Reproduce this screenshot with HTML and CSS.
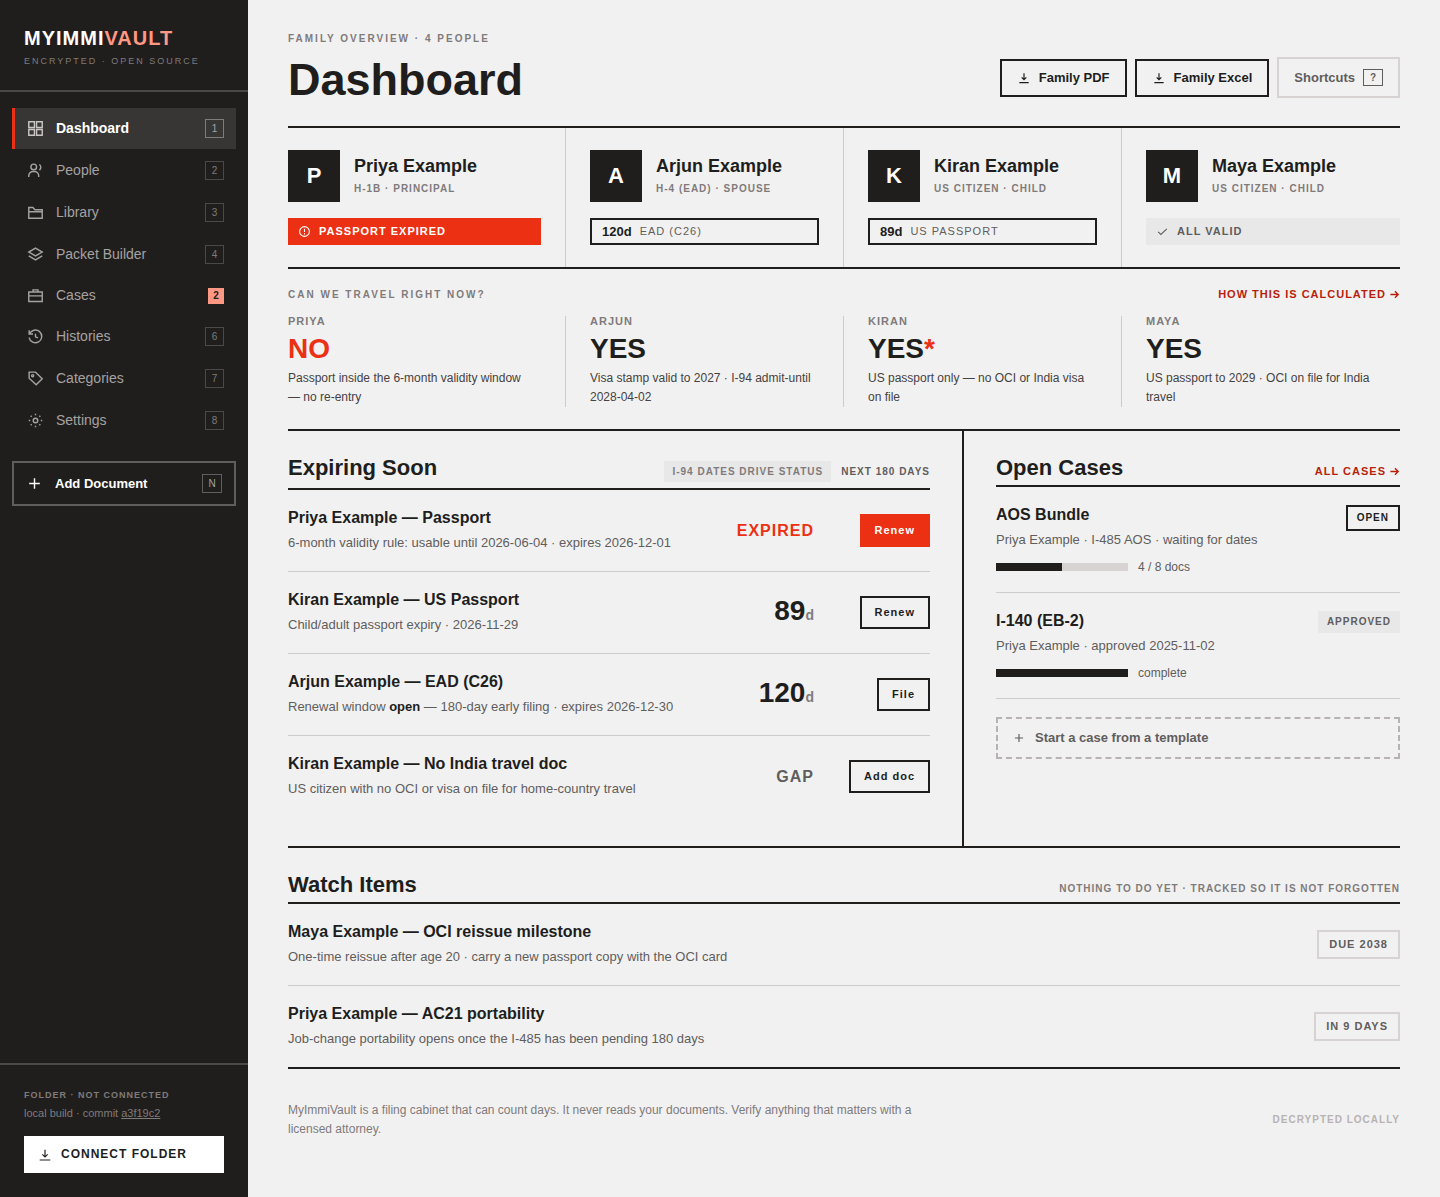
FILE: index.html
```html
<!DOCTYPE html>
<html lang="en">
<head>
    <meta charset="UTF-8">
    <meta name="viewport" content="width=device-width, initial-scale=1.0">
    <title>MyImmiVault - Dashboard</title>
    <link rel="stylesheet" href="styles.css">
</head>
<body>
    <aside class="sidebar">
        <div class="brand">
            <div class="brand-name">MYIMMI<span>VAULT</span></div>
            <div class="brand-sub">Encrypted · Open source</div>
        </div>

        <nav class="nav">
            <a class="nav-item active" href="#dashboard">
                <svg class="nav-icon" viewBox="0 0 24 24"><path d="M2.500 2.500h8v8h-8zM13.500 2.500h8v8h-8zM2.500 13.500h8v8h-8zM13.500 13.500h8v8h-8z"/></svg>
                <span class="nav-label">Dashboard</span>
                <kbd>1</kbd>
            </a>
            <a class="nav-item" href="#people">
                <svg class="nav-icon" viewBox="0 0 24 24"><circle cx="9.500" cy="7" r="4"/><path d="M2.500 21v-1.500a6 6 0 0 1 6-6h2a6 6 0 0 1 6 6V21M17.500 3.500a5 5 0 0 1 0 8"/></svg>
                <span class="nav-label">People</span>
                <kbd>2</kbd>
            </a>
            <a class="nav-item" href="#library">
                <svg class="nav-icon" viewBox="0 0 24 24"><path d="M2.500 20v-15h6l2.500 3h10.500v12zM2.500 11h19"/></svg>
                <span class="nav-label">Library</span>
                <kbd>3</kbd>
            </a>
            <a class="nav-item" href="#packets">
                <svg class="nav-icon" viewBox="0 0 24 24"><path d="M12 3l9.500 5.500L12 14 2.500 8.500zM2.500 14l9.500 5.500 9.500-5.500"/></svg>
                <span class="nav-label">Packet Builder</span>
                <kbd>4</kbd>
            </a>
            <a class="nav-item" href="#cases">
                <svg class="nav-icon" viewBox="0 0 24 24"><path d="M2.500 7h19v13.500h-19zM8.500 7V4h7v3M2.500 12.500h19"/></svg>
                <span class="nav-label">Cases</span>
                <span class="count">2</span>
            </a>
            <a class="nav-item" href="#histories">
                <svg class="nav-icon" viewBox="0 0 24 24"><path d="M3 3v5.500h5.500M3.500 8.500a9 9 0 1 1-.5 5M12 8v4.500l3.500 1.500"/></svg>
                <span class="nav-label">Histories</span>
                <kbd>6</kbd>
            </a>
            <a class="nav-item" href="#categories">
                <svg class="nav-icon" viewBox="0 0 24 24"><path d="M3 3h9l9.500 9.500-8.500 8.500L3 11.500z"/><circle cx="8" cy="8" r="1.500"/></svg>
                <span class="nav-label">Categories</span>
                <kbd>7</kbd>
            </a>
            <a class="nav-item" href="#settings">
                <svg class="nav-icon" viewBox="0 0 24 24"><circle cx="12" cy="12" r="3.200"/><path d="M12 2.500v2M12 19.500v2M2.500 12h2M19.500 12h2M5.200 5.200l1.400 1.400M17.400 17.400l1.400 1.400M5.200 18.800l1.400-1.400M17.400 6.600l1.400-1.400"/></svg>
                <span class="nav-label">Settings</span>
                <kbd>8</kbd>
            </a>
            <button class="add-doc" type="button">
                <svg class="nav-icon" viewBox="0 0 24 24"><path d="M12 4.500v15M4.500 12h15"/></svg>
                <span class="nav-label">Add Document</span>
                <kbd>N</kbd>
            </button>
        </nav>

        <div class="sidebar-foot">
            <div class="folder-state">Folder · Not connected</div>
            <div class="build">local build · commit <a href="#commit">a3f19c2</a></div>
            <button class="connect" type="button">
                <svg class="icon" viewBox="0 0 24 24"><path d="M12 3v12M7.500 11l4.500 4.500 4.500-4.500M3 20.500h18"/></svg>
                Connect folder
            </button>
        </div>
    </aside>

    <main class="main">
        <header class="page-head">
            <div>
                <div class="eyebrow">Family overview · 4 people</div>
                <h1>Dashboard</h1>
            </div>
            <div class="actions">
                <button class="btn" type="button">
                    <svg class="icon" viewBox="0 0 24 24"><path d="M12 4v11M8 11l4 4 4-4M4 20h16"/></svg>
                    Family PDF
                </button>
                <button class="btn" type="button">
                    <svg class="icon" viewBox="0 0 24 24"><path d="M12 4v11M8 11l4 4 4-4M4 20h16"/></svg>
                    Family Excel
                </button>
                <button class="btn btn-quiet" type="button">Shortcuts <kbd>?</kbd></button>
            </div>
        </header>

        <section class="people">
            <article class="person">
                <div class="person-top">
                    <div class="avatar">P</div>
                    <div>
                        <h3>Priya Example</h3>
                        <div class="person-role">H-1B · Principal</div>
                    </div>
                </div>
                <div class="status expired">
                    <svg class="status-icon" viewBox="0 0 24 24"><circle cx="12" cy="12" r="9"/><path d="M12 7v6M12 15v2.500"/></svg>
                    Passport expired
                </div>
            </article>
            <article class="person">
                <div class="person-top">
                    <div class="avatar">A</div>
                    <div>
                        <h3>Arjun Example</h3>
                        <div class="person-role">H-4 (EAD) · Spouse</div>
                    </div>
                </div>
                <div class="status due"><b>120d</b> EAD (C26)</div>
            </article>
            <article class="person">
                <div class="person-top">
                    <div class="avatar">K</div>
                    <div>
                        <h3>Kiran Example</h3>
                        <div class="person-role">US citizen · Child</div>
                    </div>
                </div>
                <div class="status due"><b>89d</b> US passport</div>
            </article>
            <article class="person">
                <div class="person-top">
                    <div class="avatar">M</div>
                    <div>
                        <h3>Maya Example</h3>
                        <div class="person-role">US citizen · Child</div>
                    </div>
                </div>
                <div class="status valid">
                    <svg class="status-icon" viewBox="0 0 24 24"><path d="M4 12.500l5 5L20 7"/></svg>
                    All valid
                </div>
            </article>
        </section>

        <section class="travel">
            <div class="travel-head">
                <div class="eyebrow">Can we travel right now?</div>
                <a class="more" href="#how">How this is calculated
                    <svg class="arrow" viewBox="0 0 24 24"><path d="M3 12h17M13 5l7 7-7 7"/></svg>
                </a>
            </div>
            <div class="travel-grid">
                <div class="travel-cell">
                    <div class="travel-name">Priya</div>
                    <div class="answer no">NO</div>
                    <p>Passport inside the 6-month validity window — no re-entry</p>
                </div>
                <div class="travel-cell">
                    <div class="travel-name">Arjun</div>
                    <div class="answer">YES</div>
                    <p>Visa stamp valid to 2027 · I-94 admit-until 2028-04-02</p>
                </div>
                <div class="travel-cell">
                    <div class="travel-name">Kiran</div>
                    <div class="answer">YES<span class="star">*</span></div>
                    <p>US passport only — no OCI or India visa on file</p>
                </div>
                <div class="travel-cell">
                    <div class="travel-name">Maya</div>
                    <div class="answer">YES</div>
                    <p>US passport to 2029 · OCI on file for India travel</p>
                </div>
            </div>
        </section>

        <div class="columns">
            <section class="expiring">
                <div class="section-head">
                    <h2>Expiring Soon</h2>
                    <div class="section-notes">
                        <span class="note-tag">I-94 dates drive status</span>
                        <span class="note note-dark">Next 180 days</span>
                    </div>
                </div>
                <div class="row">
                    <div>
                        <h4>Priya Example — Passport</h4>
                        <p>6-month validity rule: usable until 2026-06-04 · expires 2026-12-01</p>
                    </div>
                    <div class="when word red">EXPIRED</div>
                    <div class="row-action"><button class="btn-small btn-red" type="button">Renew</button></div>
                </div>
                <div class="row">
                    <div>
                        <h4>Kiran Example — US Passport</h4>
                        <p>Child/adult passport expiry · 2026-11-29</p>
                    </div>
                    <div class="when">89<small>d</small></div>
                    <div class="row-action"><button class="btn-small" type="button">Renew</button></div>
                </div>
                <div class="row">
                    <div>
                        <h4>Arjun Example — EAD (C26)</h4>
                        <p>Renewal window <b>open</b> — 180-day early filing · expires 2026-12-30</p>
                    </div>
                    <div class="when">120<small>d</small></div>
                    <div class="row-action"><button class="btn-small" type="button">File</button></div>
                </div>
                <div class="row">
                    <div>
                        <h4>Kiran Example — No India travel doc</h4>
                        <p>US citizen with no OCI or visa on file for home-country travel</p>
                    </div>
                    <div class="when word">GAP</div>
                    <div class="row-action"><button class="btn-small" type="button">Add doc</button></div>
                </div>
            </section>

            <section class="cases">
                <div class="section-head">
                    <h2>Open Cases</h2>
                    <a class="more" href="#cases">All cases
                        <svg class="arrow" viewBox="0 0 24 24"><path d="M3 12h17M13 5l7 7-7 7"/></svg>
                    </a>
                </div>
                <div class="case">
                    <div class="case-top">
                        <div>
                            <h4>AOS Bundle</h4>
                            <p>Priya Example · I-485 AOS · waiting for dates</p>
                        </div>
                        <span class="tag tag-open">Open</span>
                    </div>
                    <div class="progress">
                        <div class="bar"><div class="bar-fill" style="width: 50%"></div></div>
                        4 / 8 docs
                    </div>
                </div>
                <div class="case">
                    <div class="case-top">
                        <div>
                            <h4>I-140 (EB-2)</h4>
                            <p>Priya Example · approved 2025-11-02</p>
                        </div>
                        <span class="tag">Approved</span>
                    </div>
                    <div class="progress">
                        <div class="bar"><div class="bar-fill" style="width: 100%"></div></div>
                        complete
                    </div>
                </div>
                <button class="new-case" type="button">
                    <svg class="icon" viewBox="0 0 24 24"><path d="M12 5v14M5 12h14"/></svg>
                    Start a case from a template
                </button>
            </section>
        </div>

        <section class="watch">
            <div class="section-head">
                <h2>Watch Items</h2>
                <span class="note">Nothing to do yet · Tracked so it is not forgotten</span>
            </div>
            <div class="row">
                <div>
                    <h4>Maya Example — OCI reissue milestone</h4>
                    <p>One-time reissue after age 20 · carry a new passport copy with the OCI card</p>
                </div>
                <span class="due-tag">Due 2038</span>
            </div>
            <div class="row">
                <div>
                    <h4>Priya Example — AC21 portability</h4>
                    <p>Job-change portability opens once the I-485 has been pending 180 days</p>
                </div>
                <span class="due-tag">In 9 days</span>
            </div>
        </section>

        <footer class="page-foot">
            <p>MyImmiVault is a filing cabinet that can count days. It never reads your documents. Verify anything that matters with a licensed attorney.</p>
            <span class="local">Decrypted locally</span>
        </footer>
    </main>
</body>
</html>
```
FILE: styles.css
```css
:root {
    --ink: #201e1d;
    --paper: #f2f1f1;
    --red: #ec3013;
    --coral: #ff9783;
    --link: #b81f0b;
    --text: #454241;
    --muted: #605d5d;
    --soft: #7f7b7b;
    --line: #cccccc;
    --border: #d7d3d3;
    --fill: #e8e8e8;
}

* {
    box-sizing: border-box;
}

body {
    display: flex;
    margin: 0;
    min-height: 100vh;
    background: var(--paper);
    color: var(--ink);
    font-family: "Liberation Sans", Arial, sans-serif;
    font-size: 13px;
}

h1, h2, h3, h4, p {
    margin: 0;
}

button {
    font-family: inherit;
    font-weight: bold;
    color: var(--ink);
    background: transparent;
    border: 2px solid var(--ink);
    border-radius: 0;
    cursor: pointer;
}

svg {
    flex: none;
    fill: none;
    stroke: currentColor;
    stroke-width: 2;
}

kbd {
    flex: none;
    width: 19px;
    border: 1px solid;
    font-family: inherit;
    font-size: 10px;
    line-height: 17px;
    text-align: center;
}

/* sidebar */
.sidebar {
    position: sticky;
    top: 0;
    flex: none;
    display: flex;
    flex-direction: column;
    width: 248px;
    height: 100vh;
    background: var(--ink);
    color: #a5a2a1;
}

.brand {
    padding: 28px 24px 23px;
    border-bottom: 2px solid #4b4848;
}

.brand-name {
    color: #fff;
    font-size: 20px;
    font-weight: bold;
    line-height: 20px;
    letter-spacing: 1px;
}

.brand-name span {
    color: var(--coral);
}

.brand-sub {
    margin-top: 7px;
    color: var(--soft);
    font-size: 9px;
    line-height: 12px;
    letter-spacing: 2px;
    text-transform: uppercase;
}

.nav {
    flex: 1;
    display: flex;
    flex-direction: column;
    gap: 1px;
    padding: 16px 12px;
}

.nav-item {
    display: flex;
    align-items: center;
    gap: 12px;
    padding: 11px 12px;
    border-left: 3px solid transparent;
    color: inherit;
    font-size: 14px;
    line-height: 17px;
    text-decoration: none;
}

.nav-item kbd {
    border-color: #4b4848;
    color: var(--soft);
}

.nav-item.active {
    border-left-color: var(--red);
    background: #383635;
    color: #fff;
    font-weight: bold;
}

.nav-item.active .nav-icon {
    color: #c9c6c5;
}

.nav-item.active kbd {
    border-color: #7f7b7b;
    color: #a5a2a1;
    font-weight: normal;
}

.nav-icon {
    width: 17px;
    height: 17px;
}

.nav-label {
    flex: 1;
}

.count {
    width: 16px;
    background: var(--coral);
    color: var(--ink);
    font-size: 10px;
    font-weight: bold;
    line-height: 16px;
    text-align: center;
}

.add-doc {
    display: flex;
    align-items: center;
    gap: 12px;
    margin-top: 19px;
    padding: 11px 12px;
    border-color: #605d5d;
    color: #fff;
    font-size: 13px;
    text-align: left;
}

.add-doc kbd {
    width: 20px;
    border-color: #605d5d;
    color: #a5a2a1;
    font-weight: normal;
}

.sidebar-foot {
    padding: 24px;
    border-top: 2px solid #4b4848;
    color: var(--soft);
}

.folder-state {
    font-size: 9px;
    font-weight: bold;
    line-height: 12px;
    letter-spacing: 1px;
    text-transform: uppercase;
}

.build {
    margin-top: 4px;
    font-size: 11px;
    line-height: 16px;
}

.build a {
    color: inherit;
}

.connect {
    display: flex;
    align-items: center;
    gap: 9px;
    width: 100%;
    margin-top: 15px;
    padding: 11px 14px;
    border: 0;
    background: #fff;
    font-size: 12px;
    line-height: 15px;
    letter-spacing: 1px;
    text-transform: uppercase;
}

.icon {
    width: 14px;
    height: 14px;
}

/* page header */
.main {
    flex: 1;
    min-width: 0;
    padding: 32px 40px;
}

.page-head {
    display: flex;
    align-items: flex-end;
    justify-content: space-between;
    padding-bottom: 28px;
    border-bottom: 2px solid var(--ink);
}

.eyebrow {
    color: var(--soft);
    font-size: 10px;
    font-weight: bold;
    line-height: 14px;
    letter-spacing: 2px;
    text-transform: uppercase;
}

h1 {
    margin-top: 16px;
    font-size: 45px;
    line-height: 36px;
}

.actions {
    display: flex;
    align-items: center;
    gap: 8px;
}

.btn {
    display: flex;
    align-items: center;
    gap: 8px;
    padding: 10px 15px;
    font-size: 13px;
    line-height: 14px;
}

.btn-quiet {
    border-color: var(--border);
    color: var(--muted);
}

.btn-quiet kbd {
    width: 20px;
    line-height: 15px;
}

/* people */
.people {
    display: grid;
    grid-template-columns: repeat(4, 1fr);
    border-bottom: 2px solid var(--ink);
}

.person {
    padding: 22px 24px;
    border-right: 1px solid var(--line);
}

.person:first-child,
.travel-cell:first-child {
    padding-left: 0;
}

.person:last-child,
.travel-cell:last-child {
    padding-right: 0;
    border-right: 0;
}

.person-top {
    display: flex;
    align-items: center;
    gap: 14px;
}

.avatar {
    width: 52px;
    background: var(--ink);
    color: #fff;
    font-size: 22px;
    font-weight: bold;
    line-height: 52px;
    text-align: center;
}

h3 {
    font-size: 18px;
    line-height: 20px;
}

.person-role {
    margin-top: 5px;
    color: var(--soft);
    font-size: 10px;
    font-weight: bold;
    line-height: 16px;
    letter-spacing: 1px;
    text-transform: uppercase;
}

.status {
    display: flex;
    align-items: center;
    gap: 8px;
    margin-top: 16px;
    padding: 7px 10px;
    font-size: 11px;
    font-weight: bold;
    line-height: 13px;
    letter-spacing: 1px;
    text-transform: uppercase;
}

.status-icon {
    width: 13px;
    height: 13px;
}

.status b {
    color: var(--ink);
    font-size: 13px;
    letter-spacing: 0;
    text-transform: none;
}

.expired {
    background: var(--red);
    color: #fff;
}

.due {
    padding: 5px 10px;
    border: 2px solid var(--ink);
    color: var(--muted);
    font-weight: normal;
}

.valid {
    background: var(--fill);
    color: var(--muted);
}

/* travel */
.travel {
    padding: 18px 0 22px;
    border-bottom: 2px solid var(--ink);
}

.travel-head {
    display: flex;
    align-items: center;
    justify-content: space-between;
    margin-bottom: 14px;
}

.more {
    display: flex;
    align-items: center;
    gap: 3px;
    color: var(--link);
    font-size: 11px;
    font-weight: bold;
    line-height: 15px;
    letter-spacing: 1px;
    text-decoration: none;
    text-transform: uppercase;
}

.arrow {
    width: 11px;
    height: 11px;
    stroke-width: 3;
}

.travel-grid {
    display: grid;
    grid-template-columns: repeat(4, 1fr);
}

.travel-cell {
    padding: 0 24px;
    border-right: 1px solid var(--line);
}

.travel-name {
    color: var(--soft);
    font-size: 11px;
    font-weight: bold;
    line-height: 11px;
    letter-spacing: 1px;
    text-transform: uppercase;
}

.answer {
    margin: 8px 0 6px;
    font-size: 28px;
    font-weight: bold;
    line-height: 28px;
}

.no, .star, .red {
    color: var(--red);
}

.travel-cell p {
    max-width: 240px;
    color: var(--text);
    font-size: 12px;
    line-height: 19px;
}

/* expiring + cases */
.columns {
    display: grid;
    grid-template-columns: 676fr 436fr;
    border-bottom: 2px solid var(--ink);
}

.expiring {
    padding: 24px 32px 29px 0;
    border-right: 2px solid var(--ink);
}

.cases {
    padding: 24px 0 29px 32px;
}

.section-head {
    display: flex;
    align-items: baseline;
    justify-content: space-between;
    padding-bottom: 4px;
    border-bottom: 2px solid var(--ink);
}

h2 {
    font-size: 22px;
    line-height: 26px;
}

.section-notes {
    display: flex;
    align-items: baseline;
    gap: 10px;
}

.note-tag {
    margin-bottom: 2px;
    padding: 4px 8px;
    background: var(--fill);
    color: var(--soft);
    font-size: 10px;
    font-weight: bold;
    line-height: 13px;
    letter-spacing: 1px;
    text-transform: uppercase;
}

.note {
    color: var(--soft);
    font-size: 10px;
    font-weight: bold;
    line-height: 13px;
    letter-spacing: 1px;
    text-transform: uppercase;
}

.note-dark {
    color: var(--muted);
}

.row {
    display: flex;
    align-items: center;
    gap: 20px;
    padding: 18px 0;
    border-bottom: 1px solid var(--line);
}

.row:last-child {
    border-bottom: 0;
}

.row > :first-child {
    flex: 1;
}

h4 {
    font-size: 16px;
    line-height: 20px;
}

.row p,
.case p {
    margin-top: 4px;
    color: var(--muted);
    font-size: 13px;
    line-height: 21px;
}

.row p b {
    color: var(--ink);
}

.when {
    font-size: 28px;
    font-weight: bold;
    line-height: 28px;
}

.when small {
    color: var(--soft);
    font-size: 14px;
}

.word {
    font-size: 16px;
    letter-spacing: 1px;
    color: var(--muted);
}

.word.red {
    color: var(--red);
}

.row-action {
    display: flex;
    justify-content: flex-end;
    width: 96px;
}

.btn-small {
    padding: 8px 13px;
    font-size: 11px;
    line-height: 13px;
    letter-spacing: 1px;
}

.btn-red {
    border-color: var(--red);
    background: var(--red);
    color: #fff;
}

.case {
    padding: 18px 0;
    border-bottom: 1px solid var(--line);
}

.case-top {
    display: flex;
    align-items: flex-start;
    justify-content: space-between;
}

.tag {
    padding: 5px 9px;
    background: var(--fill);
    color: var(--muted);
    font-size: 10px;
    font-weight: bold;
    line-height: 12px;
    letter-spacing: 1px;
    text-transform: uppercase;
}

.tag-open {
    border: 2px solid var(--ink);
    background: transparent;
    color: var(--ink);
}

.progress {
    display: flex;
    align-items: center;
    gap: 10px;
    margin-top: 10px;
    color: var(--muted);
    font-size: 12px;
    line-height: 14px;
}

.bar {
    width: 132px;
    height: 8px;
    background: var(--border);
}

.bar-fill {
    height: 100%;
    background: var(--ink);
}

.new-case {
    display: flex;
    align-items: center;
    gap: 9px;
    width: 100%;
    margin-top: 18px;
    padding: 12px 14px;
    border: 2px dashed #b7b3b3;
    color: var(--muted);
    font-size: 13px;
    line-height: 14px;
}

/* watch items */
.watch {
    padding-top: 24px;
    border-bottom: 2px solid var(--ink);
}

.due-tag {
    padding: 6px 10px;
    border: 2px solid var(--border);
    color: var(--muted);
    font-size: 11px;
    font-weight: bold;
    line-height: 13px;
    letter-spacing: 1px;
    text-transform: uppercase;
}

.page-foot {
    display: flex;
    align-items: center;
    justify-content: space-between;
    padding-top: 32px;
}

.page-foot p {
    max-width: 640px;
    color: var(--soft);
    font-size: 12px;
    line-height: 19px;
}

.local {
    color: #b7b3b3;
    font-size: 10px;
    font-weight: bold;
    line-height: 12px;
    letter-spacing: 1px;
    text-transform: uppercase;
}
```
